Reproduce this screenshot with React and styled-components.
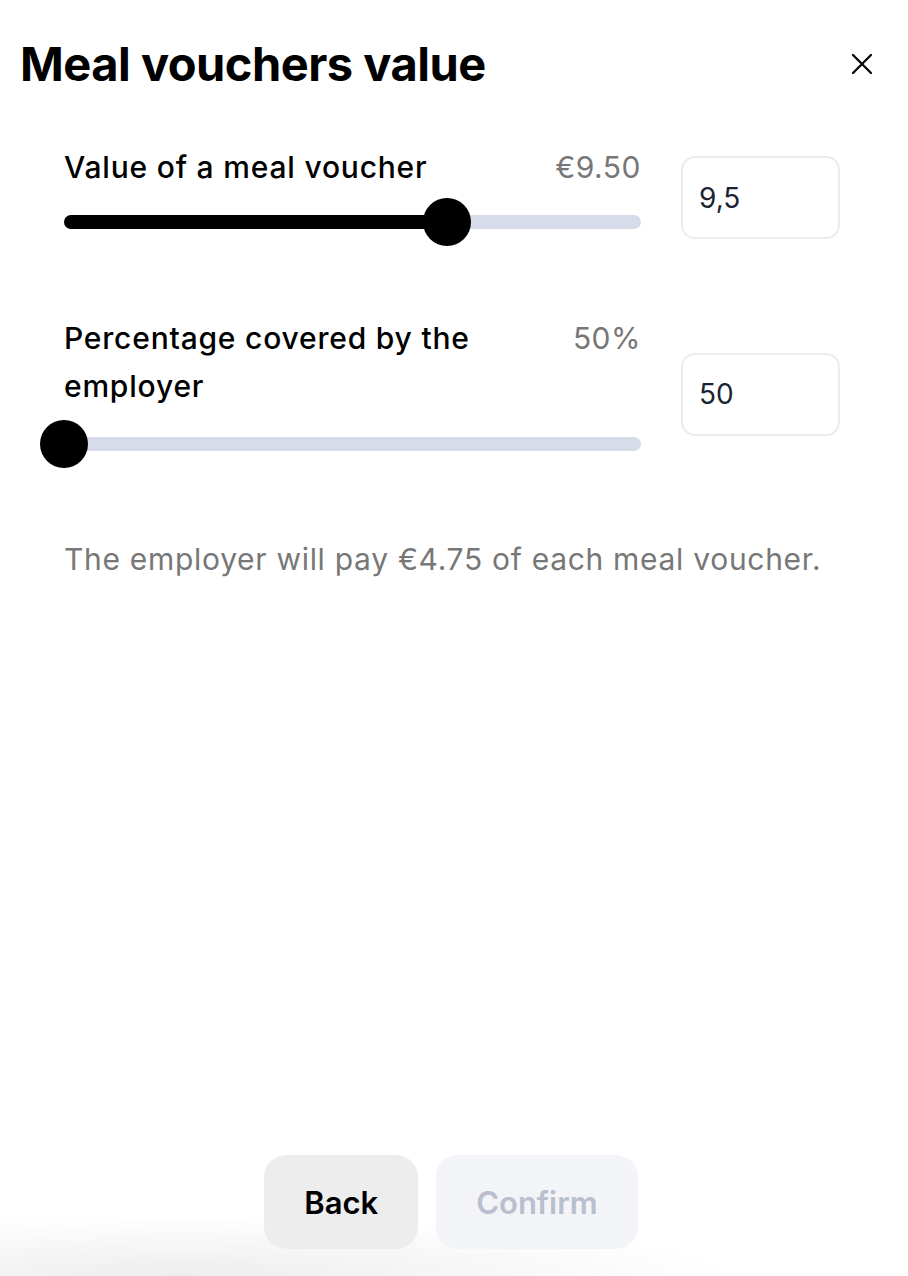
import React, { useState } from "react";
import styled, { createGlobalStyle } from "styled-components";

const GlobalStyle = createGlobalStyle`
  html, body {
    margin: 0;
    padding: 0;
    background: #fff;
  }
  body {
    font-family: Inter, "Noto Sans", sans-serif;
    -webkit-font-smoothing: antialiased;
  }
`;

const Page = styled.div`
  min-height: 100vh;
  display: flex;
  flex-direction: column;
  box-sizing: border-box;
`;

const Header = styled.header`
  display: flex;
  align-items: center;
  justify-content: space-between;
  padding: 34px 34px 0 20px;
`;

const Title = styled.h1`
  margin: 0;
  font-size: 47px;
  line-height: 60px;
  font-weight: 700;
  letter-spacing: -0.5px;
  color: #000;
`;

const CloseButton = styled.button`
  border: none;
  background: transparent;
  padding: 0;
  width: 24px;
  height: 24px;
  display: grid;
  place-content: center;
  cursor: pointer;
  color: #000;
`;

const Content = styled.main`
  padding: 49px 68px 0 64px;
  display: flex;
  flex-direction: column;
`;

const Row = styled.div`
  display: grid;
  grid-template-columns: 1fr 159px;
  column-gap: 40px;
  align-items: center;
  margin-bottom: ${(p) => p.$gap || 0}px;
`;

const Field = styled.div`
  display: flex;
  flex-direction: column;
`;

const LabelLine = styled.div`
  display: flex;
  justify-content: space-between;
  align-items: flex-start;
  gap: 20px;
`;

const Label = styled.label`
  font-size: 30px;
  line-height: 48px;
  font-weight: 500;
  color: #000;
  letter-spacing: 0.8px;
  max-width: 440px;
`;

const Amount = styled.span`
  font-size: 30px;
  line-height: 48px;
  font-weight: 400;
  color: #777;
  letter-spacing: 0.5px;
`;

const SliderWrap = styled.div`
  position: relative;
  height: 48px;
  margin-top: ${(p) => p.$top}px;
  cursor: pointer;
`;

const Track = styled.div`
  position: absolute;
  left: 0;
  right: 0;
  top: 17px;
  height: 14px;
  border-radius: 7px;
  background: #d8dbe9;
`;

const Fill = styled.div`
  position: absolute;
  left: 0;
  top: 0;
  bottom: 0;
  border-radius: 7px;
  background: #000;
`;

const Thumb = styled.div`
  position: absolute;
  top: 0;
  width: 48px;
  height: 48px;
  margin-left: -24px;
  border-radius: 50%;
  background: #000;
`;

const NumberInput = styled.input`
  box-sizing: border-box;
  width: 159px;
  height: 83px;
  margin-top: 6px;
  border: 2px solid #ebebf2;
  border-radius: 14px;
  padding: 0 16px;
  font-family: Inter, "Noto Sans", sans-serif;
  font-size: 28px;
  color: #1c2433;
  background: #fff;
  outline: none;
`;

const Note = styled.p`
  margin: 71px 0 0;
  font-size: 30px;
  line-height: 40px;
  color: #777;
  letter-spacing: 0.7px;
`;

const Footer = styled.footer`
  margin-top: auto;
  display: flex;
  justify-content: center;
  gap: 18px;
  padding: 0 6px 27px 0;
  background: radial-gradient(
    ellipse 560px 60px at 20% 100%,
    rgba(0, 0, 0, 0.07),
    rgba(0, 0, 0, 0) 100%
  );
`;

const Button = styled.button`
  height: 94px;
  padding: 0 40px;
  border: none;
  border-radius: 22px;
  font-family: Inter, "Noto Sans", sans-serif;
  font-size: 31px;
  font-weight: 600;
  background: ${(p) => (p.$primary ? "#f3f4f8" : "#ededed")};
  color: ${(p) => (p.$primary ? "#b9bfcd" : "#000")};
  cursor: ${(p) => (p.$primary ? "default" : "pointer")};
`;

const Slider = ({ fraction, top = 7 }) => (
  <SliderWrap $top={top}>
    <Track>
      <Fill style={{ width: `${fraction * 100}%` }} />
    </Track>
    <Thumb style={{ left: `${fraction * 100}%` }} />
  </SliderWrap>
);

const CloseIcon = () => (
  <svg width="22" height="22" viewBox="0 0 22 22" fill="none">
    <path d="M2 2L20 20M20 2L2 20" stroke="currentColor" strokeWidth="2.2" strokeLinecap="round" />
  </svg>
);

export default function App() {
  const [value, setValue] = useState("9,5");
  const [percent, setPercent] = useState("50");

  return (
    <Page>
      <GlobalStyle />
      <Header>
        <Title>Meal vouchers value</Title>
        <CloseButton aria-label="Close">
          <CloseIcon />
        </CloseButton>
      </Header>

      <Content>
        <Row $gap={68}>
          <Field>
            <LabelLine>
              <Label>Value of a meal voucher</Label>
              <Amount>€9.50</Amount>
            </LabelLine>
            <Slider fraction={0.663} />
          </Field>
          <NumberInput value={value} onChange={(e) => setValue(e.target.value)} />
        </Row>

        <Row>
          <Field>
            <LabelLine>
              <Label>Percentage covered by the employer</Label>
              <Amount>50%</Amount>
            </LabelLine>
            <Slider fraction={0} top={10} />
          </Field>
          <NumberInput value={percent} onChange={(e) => setPercent(e.target.value)} />
        </Row>

        <Note>The employer will pay €4.75 of each meal voucher.</Note>
      </Content>

      <Footer>
        <Button>Back</Button>
        <Button $primary>Confirm</Button>
      </Footer>
    </Page>
  );
}
